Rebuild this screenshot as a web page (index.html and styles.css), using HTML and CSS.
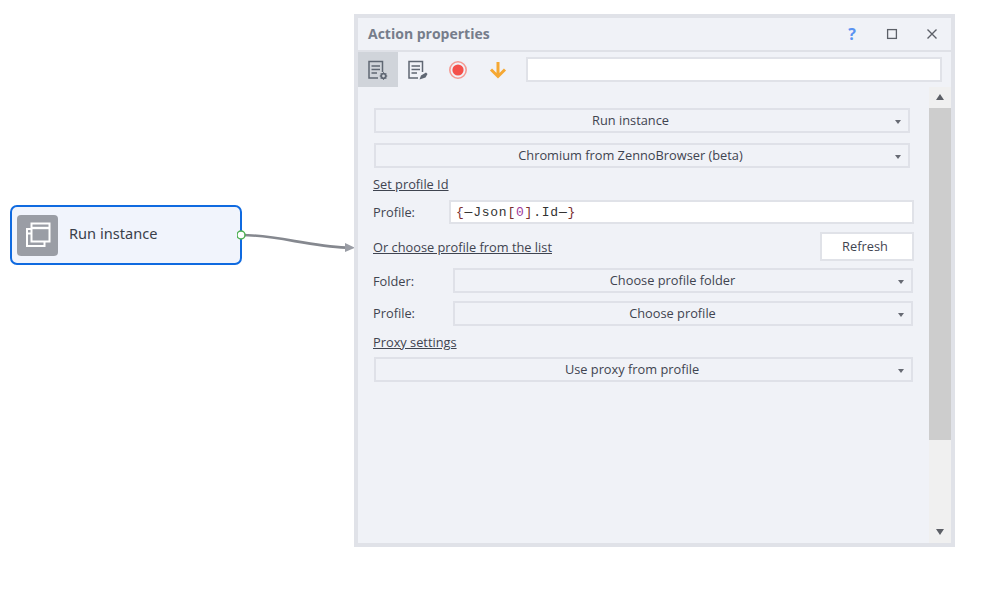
FILE: index.html
```html
<!DOCTYPE html>
<html lang="en">
<head>
<meta charset="utf-8">
<title>Action properties</title>
<link rel="stylesheet" href="styles.css">
</head>
<body>
<div class="canvas">
  <div class="node">
    <div class="node-icon">
      <svg width="26" height="26" viewBox="0 0 26 26" fill="none" stroke="#fff" stroke-width="2">
        <rect x="6.5" y="1.5" width="18" height="18"/>
        <path d="M6.5 6H24.5" stroke-width="2.4"/>
        <path d="M6.5 7H2V24H19.5V19.5"/>
        <path d="M2 11.5H6.5"/>
      </svg>
    </div>
    <span class="node-label">Run instance</span>
  </div>
  <svg class="link" width="125" height="30" viewBox="0 0 125 30" fill="none">
    <path d="M4 6C40 6 70 17 109 18.6" stroke="#85888f" stroke-width="2.6"/>
    <path d="M108 14L118 18.7L108 23Z" fill="#9a9da5"/>
    <circle cx="4" cy="6" r="4" fill="#fff" stroke="#4caf50" stroke-width="1.5"/>
  </svg>

  <section class="window">
    <header class="titlebar">
      <span class="title">Action properties</span>
      <span class="help">?</span>
      <svg class="win-btn" width="12" height="12" viewBox="0 0 12 12" fill="none" stroke="#5c6068" stroke-width="1.3"><rect x="1.6" y="1.6" width="8.8" height="8.8"/></svg>
      <svg class="win-btn" width="12" height="12" viewBox="0 0 12 12" fill="none" stroke="#5c6068" stroke-width="1.4"><path d="M1.5 1.5L10.5 10.5M10.5 1.5L1.5 10.5"/></svg>
    </header>
    <div class="toolbar">
      <button class="tool tool-active">
        <svg width="22" height="22" viewBox="0 0 22 22" fill="none" stroke="#5f6773" stroke-width="1.5">
          <path d="M15.5 13V2.5H2V19H11"/>
          <path d="M4.5 7H13M4.5 10.5H13M4.5 14H10"/>
          <circle cx="16.5" cy="17" r="2.3" stroke-width="1.8"/>
          <path d="M16.5 13.2V20.8M12.7 17H20.3M13.8 14.3L19.2 19.7M19.2 14.3L13.8 19.7" stroke-width="1" stroke-dasharray="1.2 5.2"/>
        </svg>
      </button>
      <button class="tool">
        <svg width="22" height="22" viewBox="0 0 22 22" fill="none" stroke="#5f6773" stroke-width="1.5">
          <path d="M15.5 13V2.5H2V19H11"/>
          <path d="M4.5 7H13M4.5 10.5H13M4.5 14H10"/>
          <path d="M12.5 20.5L14 16.5L19 13.5L20.5 15L18.5 18.5Z" fill="#5f6773" stroke="none"/>
        </svg>
      </button>
      <button class="tool">
        <svg width="20" height="20" viewBox="0 0 20 20" fill="none">
          <circle cx="10" cy="10" r="8.2" stroke="#f59a92" stroke-width="1.6"/>
          <circle cx="10" cy="10" r="5.6" fill="#f4504a"/>
        </svg>
      </button>
      <button class="tool">
        <svg width="20" height="20" viewBox="0 0 20 20" fill="none" stroke="#f5a833" stroke-width="3">
          <path d="M10 2V16M3 9.5L10 16.5L17 9.5"/>
        </svg>
      </button>
      <input class="search" type="text" aria-label="Search">
    </div>
    <div class="body">
      <div class="form">
        <div class="combo combo-main">Run instance</div>
        <div class="combo combo-main combo-second">Chromium from ZennoBrowser (beta)</div>
        <a class="section-link link-id">Set profile Id</a>
        <div class="row row-input">
          <label class="field-label">Profile:</label>
          <div class="value-input"><span class="br">{</span>—Json<span class="br">[</span><span class="num">0</span><span class="br">]</span>.Id—<span class="br">}</span></div>
        </div>
        <div class="row row-list">
          <a class="section-link">Or choose profile from the list</a>
          <button class="refresh">Refresh</button>
        </div>
        <div class="row row-folder">
          <label class="field-label">Folder:</label>
          <div class="combo combo-field">Choose profile folder</div>
        </div>
        <div class="row row-profile">
          <label class="field-label">Profile:</label>
          <div class="combo combo-field">Choose profile</div>
        </div>
        <a class="section-link link-proxy">Proxy settings</a>
        <div class="combo combo-proxy">Use proxy from profile</div>
      </div>
      <div class="scrollbar">
        <span class="arrow arrow-up"></span>
        <div class="thumb"></div>
        <span class="arrow arrow-down"></span>
      </div>
    </div>
  </section>
</div>
</body>
</html>
```
FILE: styles.css
```css
* { box-sizing: border-box; }
html, body { margin: 0; padding: 0; background: #fff; }
body { font-family: "Open Sans", "Noto Sans", sans-serif; font-size: 12.8px; color: #3f4450; }
.canvas { position: relative; width: 1001px; height: 590px; overflow: hidden; }

.node {
  position: absolute; left: 10px; top: 205px; width: 232px; height: 60px;
  display: flex; align-items: center; gap: 11px; padding-left: 5px;
  background: #f1f4fc; border: 2.4px solid #0f6ae0; border-radius: 7px;
}
.node-icon {
  width: 41px; height: 41px; border-radius: 4px; background: #9a9da5;
  display: flex; align-items: center; justify-content: center;
}
.node-label { font-family: "Noto Sans", sans-serif; font-size: 14.6px; color: #3a3f4a; padding-bottom: 5px; }
.link { position: absolute; left: 237px; top: 229px; }

.window {
  position: absolute; left: 354px; top: 14px; width: 601px; height: 533px;
  background: #f0f2f7; border: 4px solid #e0e2e8;
  display: flex; flex-direction: column;
}
.titlebar {
  height: 34px; flex: none; display: flex; align-items: center;
  padding: 0 13px 0 10px; border-bottom: 2px solid #dfe1e7;
}
.title { font-weight: 700; font-size: 14px; color: #767d8b; flex: 1; padding-bottom: 2px; }
.help { font-weight: 700; font-size: 16px; color: #5a93f2; margin-right: 30px; }
.win-btn + .win-btn { margin-left: 28px; }

.toolbar { height: 35px; flex: none; display: flex; align-items: center; }
.tool {
  width: 40px; height: 35px; padding: 0; border: 0; background: transparent;
  display: flex; align-items: center; justify-content: center;
}
.tool-active { background: #d0d4da; }
.search {
  margin-left: 8px; width: 416px; height: 25px;
  background: #fff; border: 2px solid #e0e2e8; padding: 0;
}

.body { flex: 1; min-height: 0; display: flex; }
.form { flex: 1; min-width: 0; padding: 21px 16px 0 16px; display: flex; flex-direction: column; align-items: flex-start; }
.combo {
  position: relative; flex: none; height: 25px; display: flex; align-items: center; justify-content: center;
  background: #f0f2f7; border: 2px solid #dfe1e8; color: #3f4450; padding: 0 21px 2px 0;
}
.combo::after {
  content: ""; position: absolute; right: 7px; top: 10px;
  border-left: 3.5px solid transparent; border-right: 3.5px solid transparent; border-top: 4px solid #666a73;
}
.combo-main { width: 536px; padding-right: 23px; }
.combo-second { margin-top: 10px; }
.combo-proxy { width: 539px; margin-top: 6px; padding-right: 23px; }
.combo-field { width: 460px; }

.section-link { color: #3f4450; text-decoration: underline; line-height: 18px; margin-left: -1px; }
.link-id { margin-top: 7px; }
.link-proxy { margin-top: 7px; }
.row { display: flex; flex: none; align-items: center; width: 540px; }
.field-label { width: 80px; flex: none; margin-left: -1px; }
.row-input { margin-top: 7px; }
.row-input .field-label { width: 76px; }
.row-list { margin-top: 8px; height: 29px; justify-content: space-between; }
.row-folder { margin-top: 7px; }
.row-profile { margin-top: 8px; }
.row-profile .field-label { padding-bottom: 2px; }
.value-input {
  width: 465px; height: 24px; background: #fff; border: 2px solid #e0e2e8;
  font-family: "Liberation Mono", monospace; font-size: 13px; letter-spacing: 0.77px;
  line-height: 22px; padding-left: 5px; color: #333;
}
.br { color: #7a2f2f; }
.num { color: #a03a9a; }
.refresh {
  width: 94px; height: 29px; background: #fff; border: 2px solid #e0e2e8;
  font: inherit; color: #3f4450; padding: 0 4px 2px 0;
}

.scrollbar {
  width: 22px; flex: none; background: #f0f0f0; display: flex; flex-direction: column; align-items: center;
}
.arrow { display: block; flex: none; width: 0; height: 0; border-left: 4.5px solid transparent; border-right: 4.5px solid transparent; }
.arrow-up { border-bottom: 6px solid #5c5f66; margin: 7px 0 8px; }
.thumb { width: 22px; height: 332px; background: #cdcdcd; }
.arrow-down { border-top: 6px solid #5c5f66; margin-top: 89px; }
```
